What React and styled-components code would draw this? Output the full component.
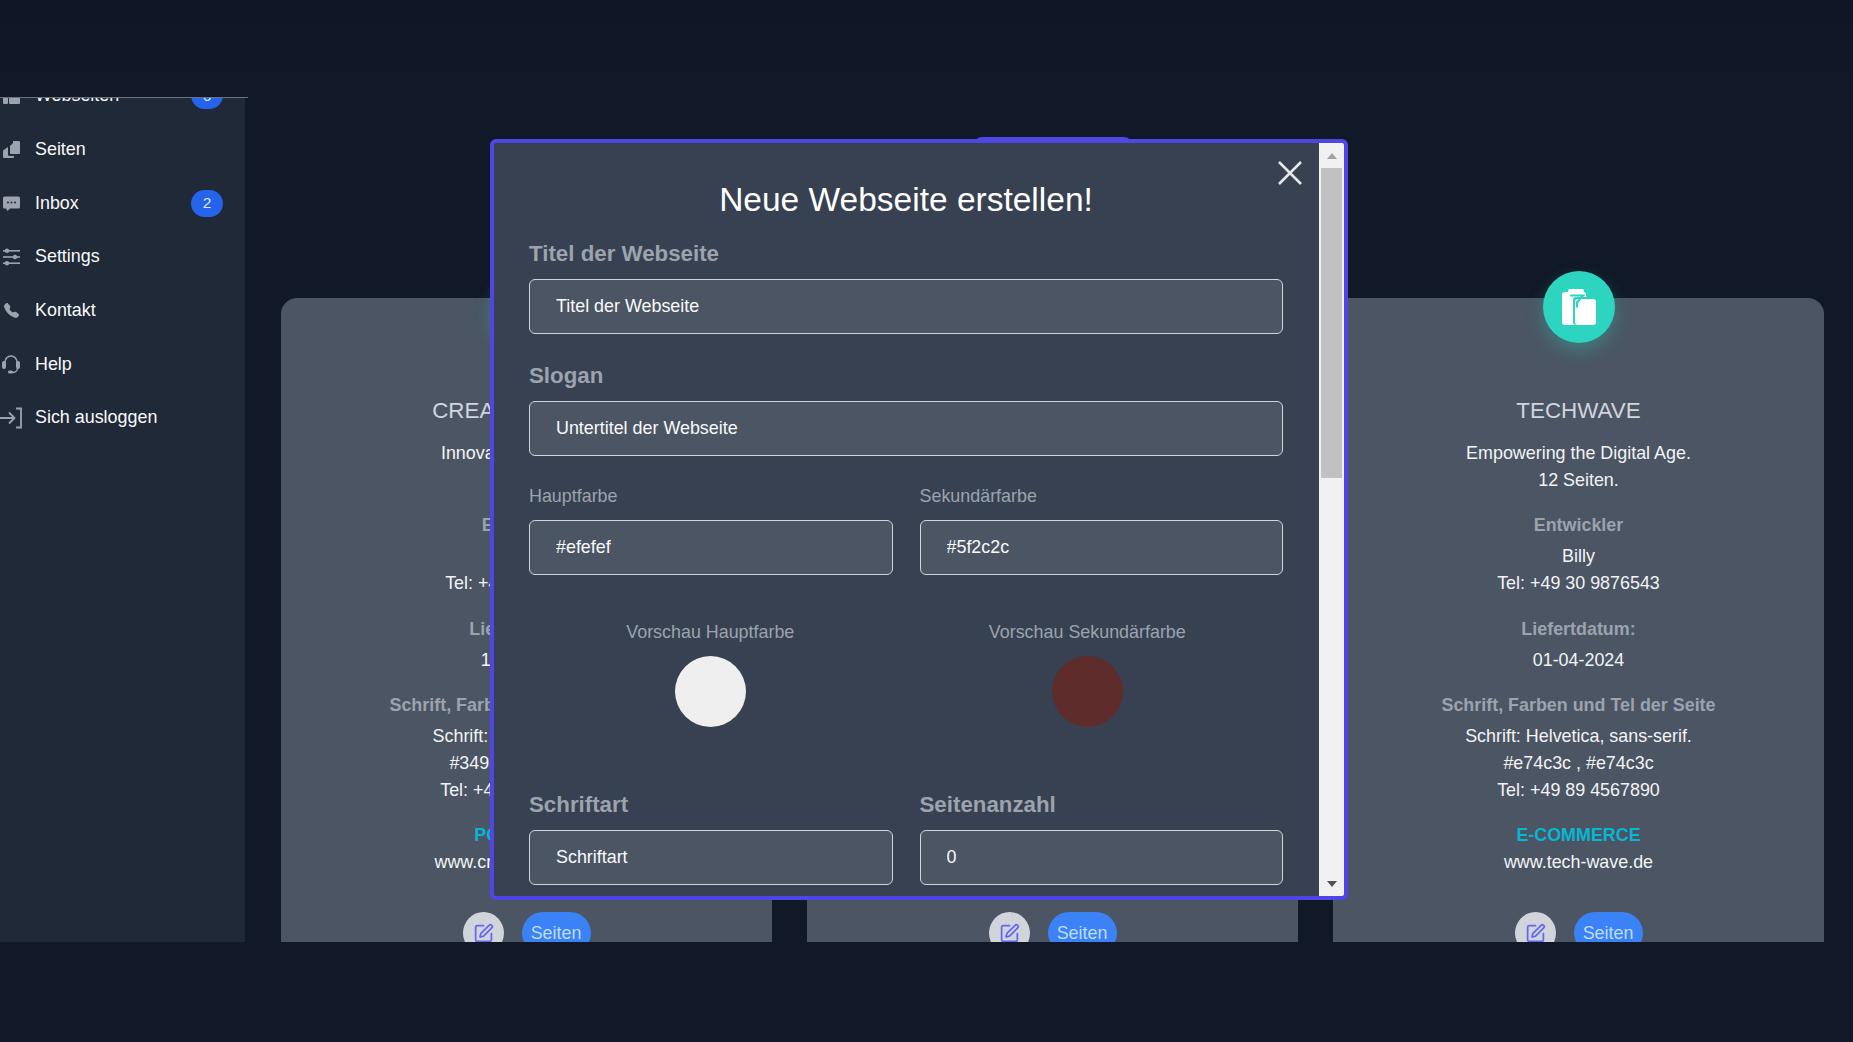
import React from 'react'
import styled, { createGlobalStyle } from 'styled-components'
import { SquarePen } from 'lucide-react'
import { BsTelephoneFill } from 'react-icons/bs'

const GlobalStyle = createGlobalStyle`
	html, body {
		margin: 0;
		height: 100%;
		overflow: hidden;
		background: #111827;
		font-family: "Liberation Sans", Arial, sans-serif;
	}
`

const sites = [
	{
		title: 'CREATIVE MINDS',
		slogan: 'Innovate Your Future.',
		pages: '8 Seiten.',
		dev: 'Anna',
		devTel: 'Tel: +49 40 1234567',
		date: '15-03-2024',
		font: 'Schrift: Arial, sans-serif.',
		colors: '#3498db , #3498db',
		tel: 'Tel: +49 221 1234567',
		kind: 'PORTFOLIO',
		url: 'www.creative-studio.de',
	},
	{
		title: 'GREENLEAF',
		slogan: 'Nachhaltig in die Zukunft.',
		pages: '5 Seiten.',
		dev: 'Lena',
		devTel: 'Tel: +49 69 7654321',
		date: '20-03-2024',
		font: 'Schrift: Verdana, sans-serif.',
		colors: '#2ecc71 , #2ecc71',
		tel: 'Tel: +49 69 7654321',
		kind: 'BLOG',
		url: 'www.green-leaf.de',
	},
	{
		title: 'TECHWAVE',
		slogan: 'Empowering the Digital Age.',
		pages: '12 Seiten.',
		dev: 'Billy',
		devTel: 'Tel: +49 30 9876543',
		date: '01-04-2024',
		font: 'Schrift: Helvetica, sans-serif.',
		colors: '#e74c3c , #e74c3c',
		tel: 'Tel: +49 89 4567890',
		kind: 'E-COMMERCE',
		url: 'www.tech-wave.de',
	},
]

const navIcons = {
	sites: (
		<>
			<rect x="3" y="3" width="5" height="16" rx="1" />
			<rect x="9" y="3" width="11" height="7" rx="1" />
			<rect x="9" y="12" width="11" height="7" rx="1" />
		</>
	),
	pages: (
		<>
			<path d="M13 2h6a1 1 0 0 1 1 1v11a1 1 0 0 1-1 1h-8a1 1 0 0 1-1-1V7l3-3z" />
			<path d="M8 8v7.500a1.500 1.500 0 0 0 1.500 1.500H14v1a1 1 0 0 1-1 1H4a1 1 0 0 1-1-1v-6a1 1 0 0 1 .3-.7L6.500 9z" />
		</>
	),
	inbox: (
		<>
			<path d="M4.500 4.500h14a1.500 1.500 0 0 1 1.500 1.500v9a1.500 1.500 0 0 1-1.500 1.500H10l-2.500 2.500-1.500-2.500H4.500A1.500 1.500 0 0 1 3 15V6a1.500 1.500 0 0 1 1.500-1.500z" />
			<circle cx="8" cy="10.500" r="1" fill="#1f2937" />
			<circle cx="11.500" cy="10.500" r="1" fill="#1f2937" />
			<circle cx="15" cy="10.500" r="1" fill="#1f2937" />
		</>
	),
	settings: (
		<>
			<rect x="3" y="4" width="17" height="1.600" />
			<rect x="3" y="10.200" width="17" height="1.600" />
			<rect x="3" y="16.400" width="17" height="1.600" />
			<circle cx="7" cy="4.800" r="2.200" />
			<circle cx="15" cy="11" r="2.200" />
			<circle cx="7" cy="17.200" r="2.200" />
		</>
	),
	help: (
		<>
			<path d="M5 11V9a6 6 0 0 1 12 0v2" fill="none" stroke="#9ca3af" strokeWidth="1.600" />
			<rect x="2" y="8" width="4" height="8" rx="2" />
			<rect x="16" y="8" width="4" height="8" rx="2" />
			<path d="M17.500 15c0 3-2.500 4.500-5 4.500" fill="none" stroke="#9ca3af" strokeWidth="1.400" />
			<rect x="8" y="17.500" width="5" height="3" rx="1.500" />
		</>
	),
	logout: (
		<>
			<path d="M0 11h14M9 5.500l5.500 5.500L9 16.500" fill="none" stroke="#9ca3af" strokeWidth="1.800" />
			<path d="M16 1.500h5v19h-5" fill="none" stroke="#9ca3af" strokeWidth="1.800" />
		</>
	),
}

const navItems = [
	{ key: 'sites', label: 'Webseiten', badge: '6' },
	{ key: 'pages', label: 'Seiten' },
	{ key: 'inbox', label: 'Inbox', badge: '2' },
	{ key: 'settings', label: 'Settings' },
	{ key: 'phone', label: 'Kontakt' },
	{ key: 'help', label: 'Help' },
	{ key: 'logout', label: 'Sich ausloggen' },
]

function NavIcon({ name }) {
	if (name === 'phone') {
		return (
			<IconBox>
				<BsTelephoneFill size={15} color="#9ca3af" />
			</IconBox>
		)
	}
	return (
		<IconBox>
			<svg width="22" height="22" viewBox="0 0 22 22" fill="#9ca3af">
				{navIcons[name]}
			</svg>
		</IconBox>
	)
}

function SiteCard({ site }) {
	return (
		<Card>
			<CardBadge>
				<svg width="34" height="36" viewBox="0 0 34 36">
					<rect x="0" y="3" width="24" height="33" rx="3" fill="#fff" />
					<rect x="6" y="0" width="16" height="6" rx="2" fill="#fff" />
					<rect x="11" y="8" width="23" height="28" rx="3" fill="#2dd4bf" />
					<rect x="13" y="10" width="21" height="26" rx="3" fill="#fff" />
					<path d="M8 6.500h13l-6 7v5" fill="none" stroke="#2dd4bf" strokeWidth="2.200" />
				</svg>
			</CardBadge>
			<CardTitle>{site.title}</CardTitle>
			<CardBlock>
				<p>{site.slogan}</p>
				<p>{site.pages}</p>
			</CardBlock>
			<CardHeading>Entwickler</CardHeading>
			<CardBlock>
				<p>{site.dev}</p>
				<p>{site.devTel}</p>
			</CardBlock>
			<CardHeading>Liefertdatum:</CardHeading>
			<CardBlock>
				<p>{site.date}</p>
			</CardBlock>
			<CardHeading>Schrift, Farben und Tel der Seite</CardHeading>
			<CardBlock>
				<p>{site.font}</p>
				<p>{site.colors}</p>
				<p>{site.tel}</p>
			</CardBlock>
			<CardKind>{site.kind}</CardKind>
			<CardBlock>
				<p>{site.url}</p>
			</CardBlock>
			<CardActions>
				<EditButton>
					<SquarePen size={21} strokeWidth={2} />
				</EditButton>
				<PagesButton>Seiten</PagesButton>
			</CardActions>
		</Card>
	)
}

function App() {
	return (
		<Page>
			<GlobalStyle />
			<TopBar />
			<Middle>
				<Sidebar>
					<NavList>
						{navItems.map((item) => (
							<NavItem key={item.key}>
								<NavIcon name={item.key} />
								<NavLabel>{item.label}</NavLabel>
								{item.badge && <Badge>{item.badge}</Badge>}
							</NavItem>
						))}
					</NavList>
				</Sidebar>
				<Main>
					<NewButton>Neue Webseite</NewButton>
					<CardGrid>
						{sites.map((site) => (
							<SiteCard key={site.title} site={site} />
						))}
					</CardGrid>
				</Main>
			</Middle>
			<BottomBar />

			<Modal>
				<ModalBody>
					<CloseButton>
						<svg width="26" height="26" viewBox="0 0 26 26">
							<path d="M2 2l22 22M24 2L2 24" stroke="#e5e7eb" strokeWidth="2.500" fill="none" />
						</svg>
					</CloseButton>
					<ModalTitle>Neue Webseite erstellen!</ModalTitle>
					<Field>
						<BigLabel>Titel der Webseite</BigLabel>
						<TextInput readOnly value="Titel der Webseite" />
					</Field>
					<Field>
						<BigLabel>Slogan</BigLabel>
						<TextInput readOnly value="Untertitel der Webseite" />
					</Field>
					<TwoCols>
						<Field>
							<SmallLabel>Hauptfarbe</SmallLabel>
							<TextInput readOnly value="#efefef" />
						</Field>
						<Field>
							<SmallLabel>Sekundärfarbe</SmallLabel>
							<TextInput readOnly value="#5f2c2c" />
						</Field>
					</TwoCols>
					<Previews>
						<Preview>
							<PreviewLabel>Vorschau Hauptfarbe</PreviewLabel>
							<Swatch $color="#efefef" />
						</Preview>
						<Preview>
							<PreviewLabel>Vorschau Sekundärfarbe</PreviewLabel>
							<Swatch $color="#5f2c2c" />
						</Preview>
					</Previews>
					<TwoCols>
						<Field>
							<BigLabel>Schriftart</BigLabel>
							<TextInput readOnly value="Schriftart" />
						</Field>
						<Field>
							<BigLabel>Seitenanzahl</BigLabel>
							<TextInput readOnly value="0" />
						</Field>
					</TwoCols>
				</ModalBody>
				<ScrollBar>
					<ScrollArrow $up />
					<ScrollTrack>
						<ScrollThumb />
					</ScrollTrack>
					<ScrollArrow />
				</ScrollBar>
			</Modal>
		</Page>
	)
}

const Page = styled.div`
	position: relative;
	width: 1853px;
	height: 1042px;
	display: flex;
	flex-direction: column;
	overflow: hidden;
	background: #111827;
`

const TopBar = styled.div`
	height: 97px;
	flex: none;
	background: linear-gradient(180deg, #0f1626, #111827);
	position: relative;
	z-index: 2;

	&::after {
		content: '';
		position: absolute;
		left: 0;
		bottom: -1px;
		width: 248px;
		height: 1px;
		background: #6b7280;
	}
`

const BottomBar = styled.div`
	height: 100px;
	flex: none;
	background: #111827;
`

const Middle = styled.div`
	flex: 1;
	display: flex;
	min-height: 0;
	overflow: hidden;
`

const Sidebar = styled.aside`
	width: 245px;
	flex: none;
	background: #1f2937;
	overflow: hidden;
`

const NavList = styled.div`
	margin-top: -28px;
	display: flex;
	flex-direction: column;
	padding-right: 22px;
`

const NavItem = styled.div`
	height: 53.7px;
	display: flex;
	align-items: center;
	gap: 13px;
`

const IconBox = styled.span`
	width: 22px;
	height: 22px;
	flex: none;
	display: flex;
	align-items: center;
	justify-content: center;
`

const NavLabel = styled.span`
	flex: 1;
	font-size: 17.9px;
	color: #f9fafb;
`

const Badge = styled.span`
	width: 32px;
	height: 27px;
	border-radius: 14px;
	background: #2563eb;
	color: #dbeafe;
	font-size: 15.5px;
	display: flex;
	align-items: center;
	justify-content: center;
`

const Main = styled.main`
	flex: 1;
	padding: 0 29px 0 36px;
	overflow: hidden;
	display: flex;
	flex-direction: column;
`

const NewButton = styled.button`
	align-self: center;
	flex: none;
	width: 158px;
	height: 60px;
	margin-top: 40px;
	border: none;
	border-radius: 8px;
	background: #4f46e5;
	color: #fff;
	font-size: 17.9px;
	font-family: inherit;
`

const CardGrid = styled.div`
	margin-top: 101px;
	display: grid;
	grid-template-columns: repeat(3, 491px);
	gap: 35px;
	align-items: start;
`

const Card = styled.section`
	background: #4b5563;
	border-radius: 16px 16px 0 0;
	display: flex;
	flex-direction: column;
	align-items: center;
	text-align: center;
	padding-bottom: 40px;
`

const CardBadge = styled.div`
	width: 72px;
	height: 72px;
	margin-top: -27px;
	border-radius: 50%;
	background: #2dd4bf;
	box-shadow: 0 8px 18px rgba(45, 212, 191, 0.3);
	display: flex;
	align-items: center;
	justify-content: center;
`

const CardTitle = styled.h3`
	margin: 54px 0 0;
	font-size: 22.4px;
	line-height: 28px;
	font-weight: 400;
	color: #d1d5db;
`

const CardBlock = styled.div`
	margin-top: 15px;
	font-size: 17.9px;
	line-height: 27px;
	color: #f3f4f6;

	p {
		margin: 0;
	}
`

const CardHeading = styled.h4`
	margin: 20.3px 0 -8px;
	font-size: 17.9px;
	line-height: 22px;
	font-weight: 700;
	color: #9ca3af;
`

const CardKind = styled(CardHeading)`
	color: #06b6d4;
	margin-bottom: -12px;
`

const CardActions = styled.div`
	margin-top: 36px;
	display: flex;
	align-items: center;
	gap: 18px;
`

const EditButton = styled.button`
	width: 41px;
	height: 42px;
	padding: 0;
	border: none;
	border-radius: 50%;
	background: #d1d5db;
	color: #6366f1;
	display: flex;
	align-items: center;
	justify-content: center;
`

const PagesButton = styled.button`
	width: 69px;
	height: 42px;
	padding: 0;
	border: none;
	border-radius: 21px;
	background: #3b82f6;
	color: #bfdbfe;
	font-family: inherit;
	font-size: 17.9px;
`

const Modal = styled.div`
	position: absolute;
	left: 490px;
	top: 139px;
	width: 858px;
	height: 761px;
	box-sizing: border-box;
	border: 4px solid #4f46e5;
	border-radius: 6px;
	background: #374151;
	display: flex;
	overflow: hidden;
	z-index: 5;
`

const ModalBody = styled.div`
	position: relative;
	flex: 1;
	min-width: 0;
	padding: 46px 36px 0 35px;
	display: flex;
	flex-direction: column;
	overflow: hidden;
`

const CloseButton = styled.button`
	position: absolute;
	top: 17px;
	right: 16px;
	width: 26px;
	height: 26px;
	padding: 0;
	border: none;
	background: none;
`

const ModalTitle = styled.h2`
	margin: 0;
	font-size: 33.5px;
	line-height: 22px;
	font-weight: 400;
	color: #fff;
	text-align: center;
`

const Field = styled.div`
	display: flex;
	flex-direction: column;
	flex: none;
	width: 100%;
	min-width: 0;
`

const BigLabel = styled.label`
	font-size: 22.3px;
	line-height: 26px;
	font-weight: 700;
	color: #9ca3af;
	margin: 29.5px 0 12px;
`

const SmallLabel = styled.label`
	font-size: 17.9px;
	line-height: 22px;
	color: #9ca3af;
	margin: 29px 0 13px;
`

const TextInput = styled.input`
	box-sizing: border-box;
	width: 100%;
	height: 55px;
	padding: 0 26px;
	border: 1.5px solid #d1d5db;
	border-radius: 6px;
	background: #4b5563;
	color: #f9fafb;
	font-family: inherit;
	font-size: 17.9px;
	outline: none;
`

const TwoCols = styled.div`
	display: grid;
	grid-template-columns: 1fr 1fr;
	gap: 27px;
`

const Previews = styled.div`
	display: flex;
	justify-content: space-around;
	margin-top: 46px;
	margin-bottom: 35px;
`

const Preview = styled.div`
	display: flex;
	flex-direction: column;
	align-items: center;
	gap: 13px;
`

const PreviewLabel = styled.span`
	font-size: 17.9px;
	line-height: 22px;
	color: #9ca3af;
`

const Swatch = styled.div`
	width: 71px;
	height: 71px;
	border-radius: 50%;
	background: ${(p) => p.$color};
`

const ScrollBar = styled.div`
	width: 25px;
	flex: none;
	background: #f1f1f1;
	display: flex;
	flex-direction: column;
`

const ScrollArrow = styled.div`
	height: 25px;
	flex: none;
	display: flex;
	align-items: center;
	justify-content: center;

	&::before {
		content: '';
		border-left: 5px solid transparent;
		border-right: 5px solid transparent;
		${(p) => (p.$up ? 'border-bottom: 6px solid #a3a3a3;' : 'border-top: 6px solid #505050;')}
	}
`

const ScrollTrack = styled.div`
	flex: 1;
	padding: 0 2px;
`

const ScrollThumb = styled.div`
	height: 310px;
	background: #c1c1c1;
`

export default App
